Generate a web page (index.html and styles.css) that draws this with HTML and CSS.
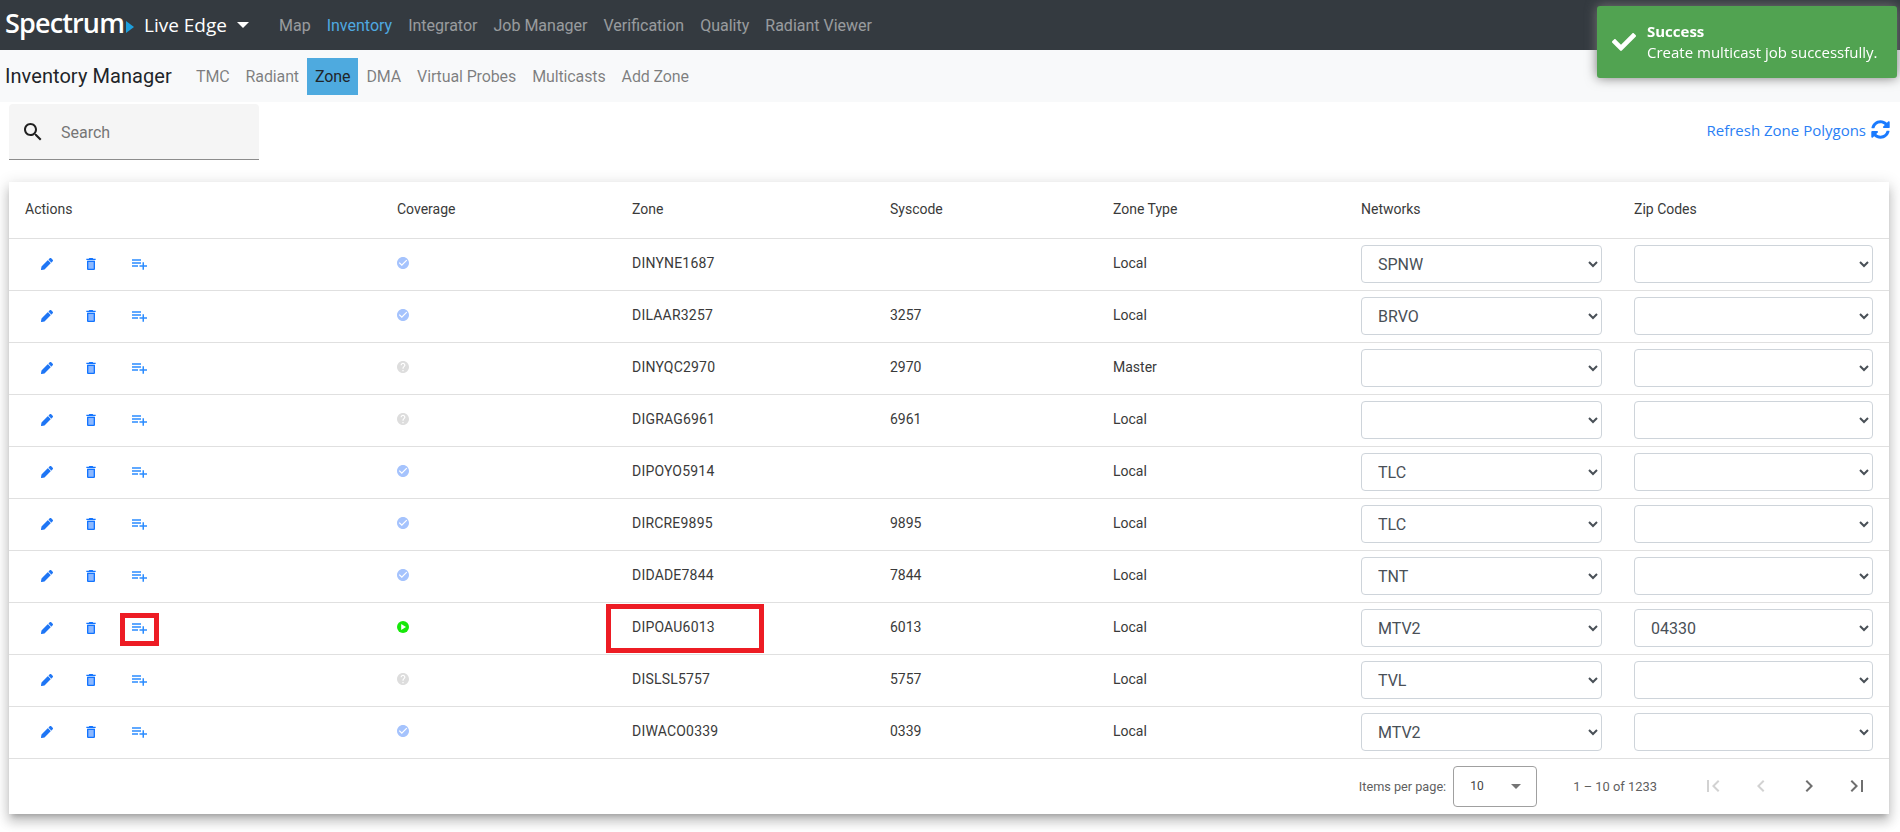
FILE: index.html
```html
<!DOCTYPE html>
<html lang="en">
<head>
<meta charset="utf-8">
<title>Inventory Manager</title>
<link rel="stylesheet" href="styles.css">
</head>
<body>
<svg class="defs" aria-hidden="true">
  <symbol id="i-edit" viewBox="0 0 512 512"><path d="M497.900 142.100l-46.100 46.100c-4.700 4.700-12.300 4.700-17 0l-111-111c-4.700-4.700-4.700-12.300 0-17l46.100-46.100c18.700-18.700 49.100-18.700 67.900 0l60.100 60.100c18.800 18.700 18.800 49.100 0 67.900zM284.200 99.800L21.600 362.400.4 483.900c-2.900 16.400 11.400 30.600 27.800 27.800l121.500-21.300 262.600-262.600c4.700-4.700 4.700-12.300 0-17l-111-111c-4.800-4.700-12.400-4.700-17.100 0z"/></symbol>
  <symbol id="i-del" viewBox="5 3 14 18"><path class="soft" d="M7 7h10v13H7z"/><path d="M6 19c0 1.100.9 2 2 2h8c1.100 0 2-.9 2-2V7H6v12zm2-10h8v10H8V9zM19 4h-3.500l-1-1h-5l-1 1H5v2h14V4z"/></symbol>
  <symbol id="i-add" viewBox="2 6 20 14"><path d="M14 10H2v2h12v-2zm0-4H2v2h12V6zm4 8v-4h-2v4h-4v2h4v4h2v-4h4v-2h-4zM2 16h8v-2H2v2z"/></symbol>
  <symbol id="i-ok" viewBox="2 2 20 20"><path d="M12 2C6.480 2 2 6.480 2 12s4.480 10 10 10 10-4.480 10-10S17.520 2 12 2zm-2 15l-5-5 1.410-1.410L10 14.170l7.590-7.590L19 8l-9 9z"/></symbol>
  <symbol id="i-help" viewBox="2 2 20 20"><path d="M12 2C6.480 2 2 6.480 2 12s4.480 10 10 10 10-4.480 10-10S17.520 2 12 2zm1 17h-2v-2h2v2zm2.070-7.750l-.9.920C13.450 12.900 13 13.500 13 15h-2v-.5c0-1.100.45-2.100 1.170-2.830l1.240-1.260c.37-.36.59-.86.59-1.410 0-1.100-.9-2-2-2s-2 .9-2 2H8c0-2.210 1.790-4 4-4s4 1.790 4 4c0 .88-.36 1.680-.93 2.250z"/></symbol>
  <symbol id="i-play" viewBox="0 0 20 20"><circle cx="10" cy="10" r="10"/><path fill="#fff" d="M7 5l8 5-8 5z"/></symbol>
</svg>

<header class="topbar">
  <a class="logo">Spectrum<span class="logo-arrow"></span></a>
  <a class="product">Live Edge<span class="caret"></span></a>
  <nav class="topnav">
    <a>Map</a><a class="active">Inventory</a><a>Integrator</a><a>Job Manager</a><a>Verification</a><a>Quality</a><a>Radiant Viewer</a>
  </nav>
</header>

<div class="subbar">
  <span class="brand">Inventory Manager</span>
  <nav class="subnav">
    <a>TMC</a><a>Radiant</a><a class="current">Zone</a><a>DMA</a><a>Virtual Probes</a><a>Multicasts</a><a>Add Zone</a>
  </nav>
</div>

<div class="toolbar">
  <label class="search">
    <svg class="search-icon" viewBox="0 0 24 24"><path d="M15.500 14h-.79l-.28-.27C15.410 12.590 16 11.110 16 9.500 16 5.910 13.090 3 9.500 3S3 5.910 3 9.500 5.910 16 9.500 16c1.610 0 3.090-.59 4.230-1.570l.27.28v.79l5 4.990L20.490 19l-4.990-5zm-6 0C7.010 14 5 11.990 5 9.500S7.010 5 9.500 5 14 7.010 14 9.500 11.990 14 9.500 14z"/></svg>
    <span class="placeholder">Search</span>
  </label>
  <a class="refresh">Refresh Zone Polygons
    <svg class="refresh-icon" viewBox="0 0 512 512"><path d="M370.720 133.280C339.458 104.008 298.888 87.962 255.848 88c-77.458.068-144.328 53.178-162.791 126.850-1.344 5.363-6.122 9.150-11.651 9.150H24.103c-7.498 0-13.194-6.807-11.807-14.176C33.933 94.924 134.813 8 256 8c66.448 0 126.791 26.136 171.315 68.685L463.030 40.970C478.149 25.851 504 36.559 504 57.941V192c0 13.255-10.745 24-24 24H345.941c-21.382 0-32.090-25.851-16.971-40.971l41.750-41.749zM32 296h134.059c21.382 0 32.090 25.851 16.971 40.971l-41.750 41.750c31.262 29.273 71.835 45.319 114.876 45.280 77.418-.07 144.315-53.144 162.787-126.849 1.344-5.363 6.122-9.150 11.651-9.150h57.304c7.498 0 13.194 6.807 11.807 14.176C478.067 417.076 377.187 504 256 504c-66.448 0-126.791-26.136-171.315-68.685L48.970 471.030C33.851 486.149 8 475.441 8 454.059V320c0-13.255 10.745-24 24-24z"/></svg>
  </a>
</div>

<section class="card">
  <table class="zones">
    <thead>
      <tr><th>Actions</th><th>Coverage</th><th>Zone</th><th>Syscode</th><th>Zone Type</th><th>Networks</th><th>Zip Codes</th></tr>
    </thead>
    <tbody>
      <tr>
        <td class="acts"><svg class="a-edit"><use href="#i-edit"/></svg><svg class="a-del"><use href="#i-del"/></svg><svg class="a-add"><use href="#i-add"/></svg></td>
        <td><svg class="cov ok"><use href="#i-ok"/></svg></td><td>DINYNE1687</td><td></td><td>Local</td>
        <td class="pick"><select class="net"><option>SPNW</option></select></td><td class="pick"><select class="zip"><option></option></select></td>
      </tr>
      <tr>
        <td class="acts"><svg class="a-edit"><use href="#i-edit"/></svg><svg class="a-del"><use href="#i-del"/></svg><svg class="a-add"><use href="#i-add"/></svg></td>
        <td><svg class="cov ok"><use href="#i-ok"/></svg></td><td>DILAAR3257</td><td>3257</td><td>Local</td>
        <td class="pick"><select class="net"><option>BRVO</option></select></td><td class="pick"><select class="zip"><option></option></select></td>
      </tr>
      <tr>
        <td class="acts"><svg class="a-edit"><use href="#i-edit"/></svg><svg class="a-del"><use href="#i-del"/></svg><svg class="a-add"><use href="#i-add"/></svg></td>
        <td><svg class="cov help"><use href="#i-help"/></svg></td><td>DINYQC2970</td><td>2970</td><td>Master</td>
        <td class="pick"><select class="net"><option></option></select></td><td class="pick"><select class="zip"><option></option></select></td>
      </tr>
      <tr>
        <td class="acts"><svg class="a-edit"><use href="#i-edit"/></svg><svg class="a-del"><use href="#i-del"/></svg><svg class="a-add"><use href="#i-add"/></svg></td>
        <td><svg class="cov help"><use href="#i-help"/></svg></td><td>DIGRAG6961</td><td>6961</td><td>Local</td>
        <td class="pick"><select class="net"><option></option></select></td><td class="pick"><select class="zip"><option></option></select></td>
      </tr>
      <tr>
        <td class="acts"><svg class="a-edit"><use href="#i-edit"/></svg><svg class="a-del"><use href="#i-del"/></svg><svg class="a-add"><use href="#i-add"/></svg></td>
        <td><svg class="cov ok"><use href="#i-ok"/></svg></td><td>DIPOYO5914</td><td></td><td>Local</td>
        <td class="pick"><select class="net"><option>TLC</option></select></td><td class="pick"><select class="zip"><option></option></select></td>
      </tr>
      <tr>
        <td class="acts"><svg class="a-edit"><use href="#i-edit"/></svg><svg class="a-del"><use href="#i-del"/></svg><svg class="a-add"><use href="#i-add"/></svg></td>
        <td><svg class="cov ok"><use href="#i-ok"/></svg></td><td>DIRCRE9895</td><td>9895</td><td>Local</td>
        <td class="pick"><select class="net"><option>TLC</option></select></td><td class="pick"><select class="zip"><option></option></select></td>
      </tr>
      <tr>
        <td class="acts"><svg class="a-edit"><use href="#i-edit"/></svg><svg class="a-del"><use href="#i-del"/></svg><svg class="a-add"><use href="#i-add"/></svg></td>
        <td><svg class="cov ok"><use href="#i-ok"/></svg></td><td>DIDADE7844</td><td>7844</td><td>Local</td>
        <td class="pick"><select class="net"><option>TNT</option></select></td><td class="pick"><select class="zip"><option></option></select></td>
      </tr>
      <tr>
        <td class="acts"><svg class="a-edit"><use href="#i-edit"/></svg><svg class="a-del"><use href="#i-del"/></svg><svg class="a-add"><use href="#i-add"/></svg><span class="mark mark-add"></span></td>
        <td><svg class="cov play"><use href="#i-play"/></svg></td><td class="zone-marked">DIPOAU6013<span class="mark mark-zone"></span></td><td>6013</td><td>Local</td>
        <td class="pick"><select class="net"><option>MTV2</option></select></td><td class="pick"><select class="zip"><option>04330</option></select></td>
      </tr>
      <tr>
        <td class="acts"><svg class="a-edit"><use href="#i-edit"/></svg><svg class="a-del"><use href="#i-del"/></svg><svg class="a-add"><use href="#i-add"/></svg></td>
        <td><svg class="cov help"><use href="#i-help"/></svg></td><td>DISLSL5757</td><td>5757</td><td>Local</td>
        <td class="pick"><select class="net"><option>TVL</option></select></td><td class="pick"><select class="zip"><option></option></select></td>
      </tr>
      <tr>
        <td class="acts"><svg class="a-edit"><use href="#i-edit"/></svg><svg class="a-del"><use href="#i-del"/></svg><svg class="a-add"><use href="#i-add"/></svg></td>
        <td><svg class="cov ok"><use href="#i-ok"/></svg></td><td>DIWACO0339</td><td>0339</td><td>Local</td>
        <td class="pick"><select class="net"><option>MTV2</option></select></td><td class="pick"><select class="zip"><option></option></select></td>
      </tr>
    </tbody>
  </table>
  <footer class="pager">
    <span class="per-label">Items per page:</span>
    <div class="per-select"><span>10</span><i class="per-arrow"></i></div>
    <span class="range">1 – 10 of 1233</span>
    <div class="pager-btns">
      <svg class="off" viewBox="0 0 24 24"><path d="M18.410 16.590L13.820 12l4.590-4.590L17 6l-6 6 6 6zM6 6h2v12H6z"/></svg>
      <svg class="off" viewBox="0 0 24 24"><path d="M15.410 7.410L14 6l-6 6 6 6 1.410-1.410L10.830 12z"/></svg>
      <svg viewBox="0 0 24 24"><path d="M10 6L8.590 7.410 13.170 12l-4.580 4.590L10 18l6-6z"/></svg>
      <svg viewBox="0 0 24 24"><path d="M5.590 7.410L10.180 12l-4.590 4.590L7 18l6-6-6-6zM16 6h2v12h-2z"/></svg>
    </div>
  </footer>
</section>

<aside class="toast">
  <svg class="toast-icon" viewBox="0 0 512 512"><path d="M173.898 439.404l-166.400-166.400c-9.997-9.997-9.997-26.206 0-36.204l36.203-36.204c9.997-9.998 26.207-9.998 36.204 0L192 312.690 432.095 72.596c9.997-9.997 26.207-9.997 36.204 0l36.203 36.204c9.997 9.997 9.997 26.206 0 36.204l-294.400 294.401c-9.998 9.997-26.207 9.997-36.204-.001z"/></svg>
  <div class="toast-body">
    <strong>Success</strong>
    <span>Create multicast job successfully.</span>
  </div>
</aside>
</body>
</html>
```

FILE: styles.css
```css
* { box-sizing: border-box; }
html, body { margin: 0; padding: 0; }
body {
  font-family: Roboto, "Liberation Sans", sans-serif;
  font-size: 14px;
  color: #212529;
  background: #fff;
  overflow: hidden;
  height: 832px;
}
.defs { display: none; }

.topbar {
  height: 50px;
  background: #343a40;
  display: flex;
  align-items: center;
  padding-left: 5px;
}
.logo {
  font-family: "Open Sans", sans-serif;
  font-weight: 600;
  font-size: 27px;
  letter-spacing: -.85px;
  color: #fff;
  width: 139px;
  display: flex;
  align-items: center;
  line-height: 30px;
  margin-top: -5px;
}
.logo-arrow {
  width: 0; height: 0;
  margin: 9px 0 0 2px;
  border-left: 8px solid #1e9fdc;
  border-top: 6px solid transparent;
  border-bottom: 6px solid transparent;
}
.product {
  font-family: "Open Sans", sans-serif;
  font-size: 19px;
  color: #fff;
  display: flex;
  align-items: center;
  width: 127px;
}
.caret {
  margin-left: 10px;
  border-top: 6px solid #fff;
  border-left: 6px solid transparent;
  border-right: 6px solid transparent;
}
.topnav { display: flex; }
.topnav a {
  padding: 0 8px;
  font-size: 16px;
  color: rgba(255,255,255,.5);
}
.topnav a.active { color: #4fa9e0; }

.subbar {
  height: 52px;
  background: #f8f9fa;
  display: flex;
  align-items: center;
  padding-left: 5px;
}
.brand { font-size: 20px; color: #212529; width: 183px; letter-spacing: .06px; }
.subnav { display: flex; align-items: center; }
.subnav a {
  height: 37px;
  line-height: 37px;
  padding: 0 8px;
  font-size: 16px;
  letter-spacing: -.12px;
  color: rgba(0,0,0,.5);
}
.subnav a.current { background: #4eaadf; color: #212529; }

.toolbar {
  height: 80px;
  display: flex;
  justify-content: space-between;
  padding: 2px 10px 0 9px;
}
.search {
  width: 250px;
  height: 56px;
  background: #f5f5f5;
  border-bottom: 1px solid #8c8c8c;
  border-radius: 4px 4px 0 0;
  display: flex;
  align-items: center;
  padding-left: 12px;
}
.search-icon { width: 24px; height: 24px; fill: #212121; }
.placeholder { margin: 2px 0 0 16px; font-size: 16px; color: #757575; }
.refresh {
  font-family: "Open Sans", sans-serif;
  font-size: 15px;
  color: #2a80f5;
  display: flex;
  align-items: center;
  gap: 5px;
  height: 50px;
  padding-top: 1px;
}
.refresh-icon { width: 19px; height: 19px; fill: #1a7bff; }

.card {
  margin: 0 11px 0 9px;
  height: 632px;
  background: #fff;
  box-shadow: 0 5px 5px -3px rgba(0,0,0,.2), 0 8px 10px 1px rgba(0,0,0,.14), 0 3px 14px 2px rgba(0,0,0,.12);
}
.zones { width: 1880px; border-collapse: collapse; table-layout: fixed; }
.zones th, .zones td {
  font-size: 14px;
  font-weight: 400;
  text-align: left;
  padding: 0 0 2px 16px;
  border-bottom: 1px solid #e0e0e0;
  color: #3a3a3a;
}
.zones th { height: 56px; }
.zones td { height: 52px; }
.zones td.pick { padding-bottom: 0; }
.zones th:nth-child(1) { width: 372px; }
.zones th:nth-child(2) { width: 235px; }
.zones th:nth-child(3) { width: 258px; }
.zones th:nth-child(4) { width: 223px; }
.zones th:nth-child(5) { width: 248px; }
.zones th:nth-child(6) { width: 273px; }
.zones th:nth-child(7) { width: 271px; }
.zones td:nth-child(3) { letter-spacing: .2px; }

.acts { position: relative; padding-left: 32px !important; }
.acts svg { display: inline-block; vertical-align: middle; }
.a-edit { width: 12px; height: 12px; fill: #1f76f5; }
.a-del { width: 10px; height: 12px; margin-left: 33px; fill: #1274ff; }
.soft { fill: #8db9ff; }
.a-add { width: 15px; height: 11px; margin-left: 36px; fill: #2b8cff; }
.cov { display: block; width: 12px; height: 12px; }
.cov.ok { fill: #a5c3fd; }
.cov.help { fill: #dddddd; }
.cov.play { fill: #17e80a; }

.zone-marked { position: relative; }
.mark { position: absolute; border: 5px solid #ed1c24; }
.mark-add { left: 111px; top: 10px; width: 39px; height: 33px; }
.mark-zone { left: -10px; top: 1px; width: 158px; height: 49px; }

select {
  font-family: Roboto, "Liberation Sans", sans-serif;
  font-size: 16px;
  color: #495057;
  height: 38px;
  background-color: #fff;
  border: 1px solid #ced4da;
  border-radius: 4px;
  padding: 6px 12px;
  display: block;
}
.net { width: 241px; }
.zip { width: 239px; }

.pager {
  height: 55px;
  display: flex;
  align-items: center;
  justify-content: flex-end;
  padding-right: 20px;
  font-size: 12.9px;
  color: #5f5f5f;
}
.per-label { font-size: 12.7px; margin-right: 7px; }
.per-select {
  width: 84px;
  height: 41px;
  border: 1px solid #a0a0a0;
  border-radius: 4px;
  display: flex;
  align-items: center;
  justify-content: space-between;
  padding: 0 15px 0 16px;
  color: #444;
  font-size: 12px;
}
.per-arrow {
  border-top: 5px solid #757575;
  border-left: 5px solid transparent;
  border-right: 5px solid transparent;
}
.range { margin-left: 36px; margin-right: 44px; }
.pager-btns { display: flex; gap: 24px; }
.pager-btns svg { width: 24px; height: 24px; fill: #6f6f6f; }
.pager-btns svg.off { fill: #d2d2d2; }

.toast {
  position: fixed;
  top: 6px;
  left: 1597px;
  width: 300px;
  height: 72px;
  background: #51a351;
  border-radius: 3px;
  box-shadow: 0 0 12px #777;
  color: #fff;
  display: flex;
  align-items: center;
  padding-left: 15px;
  font-family: "Open Sans", sans-serif;
  font-size: 15px;
}
.toast-icon { width: 24px; height: 24px; fill: #fff; flex: none; }
.toast-body { margin-left: 11px; display: flex; flex-direction: column; line-height: 21px; }
.toast-body strong { font-weight: 700; }
```
